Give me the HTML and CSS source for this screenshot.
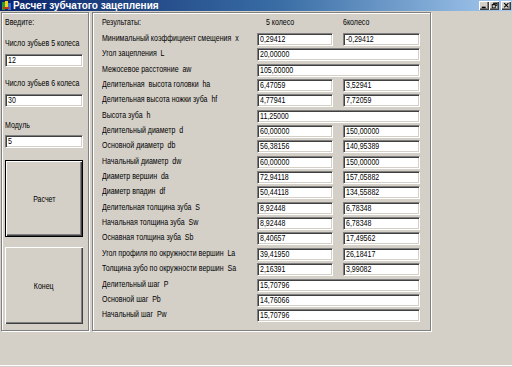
FILE: index.html
```html
<!DOCTYPE html>
<html lang="ru">

<head>
    <meta charset="UTF-8">
    <title>Расчет зубчатого зацепления</title>
    <link rel="stylesheet" href="styles.css">
</head>

<body>
    <div class="window">
        <div class="titlebar">
            <svg class="app-icon" width="9" height="9" viewBox="0 0 9 9">
                <rect x="0" y="1" width="3" height="8" fill="#2e9b2e"/>
                <rect x="3" y="0" width="3" height="7" fill="#f2d21c"/>
                <rect x="6" y="2" width="3" height="7" fill="#3a6fd8"/>
                <rect x="1" y="6" width="6" height="2" fill="#c23a1a"/>
            </svg>
            <span class="title">Расчет зубчатого зацепления</span>
            <div class="caption-buttons">
                <span class="cap-btn">
                    <svg width="9" height="9" viewBox="0 0 9 9"><rect x="1" y="6" width="5" height="2" fill="#000"/></svg>
                </span>
                <span class="cap-btn">
                    <svg width="9" height="9" viewBox="0 0 9 9">
                        <rect x="3.5" y="1.5" width="4" height="3" fill="none" stroke="#000"/>
                        <rect x="3" y="1" width="5" height="1" fill="#000"/>
                        <rect x="1.5" y="3.5" width="4" height="4" fill="#d4d0c8" stroke="#000"/>
                        <rect x="1" y="3" width="5" height="1" fill="#000"/>
                    </svg>
                </span>
                <span class="cap-btn close">
                    <svg width="9" height="9" viewBox="0 0 9 9"><path d="M1.5 1.5 L7 7 M7 1.5 L1.5 7" stroke="#000" stroke-width="1.4"/></svg>
                </span>
            </div>
        </div>

        <div class="client">
            <!-- input panel -->
            <div class="panel input-panel">
                <div class="label first"><span class="t">Введите:</span></div>
                <div class="label gap-a"><span class="t">Число зубьев 5 колеса</span></div>
                <div class="edit gap-b"><span class="t">12</span></div>
                <div class="label gap-c"><span class="t">Число зубьев 6 колеса</span></div>
                <div class="edit gap-b"><span class="t">30</span></div>
                <div class="label gap-e"><span class="t">Модуль</span></div>
                <div class="edit gap-d"><span class="t">5</span></div>
                <button class="btn default"><span class="t mid">Расчет</span></button>
                <button class="btn"><span class="t mid">Конец</span></button>
            </div>

            <!-- results panel -->
            <div class="panel result-panel">
                <div class="head">
                    <span class="head-title"><span class="t">Результаты:</span></span>
                    <span class="head-c1"><span class="t">5 колесо</span></span>
                    <span class="head-c2"><span class="t">6колесо</span></span>
                </div>
                <div class="grid">
                    <div class="rlabel"><span class="t">Минимальный коэффициент смещения  x</span></div>
                    <div class="edit c1"><span class="t">0,29412</span></div>
                    <div class="edit c2"><span class="t">-0,29412</span></div>

                    <div class="rlabel"><span class="t">Угол зацепления  L</span></div>
                    <div class="edit wide"><span class="t">20,00000</span></div>

                    <div class="rlabel"><span class="t">Межосевое расстояние  aw</span></div>
                    <div class="edit wide"><span class="t">105,00000</span></div>

                    <div class="rlabel"><span class="t">Делительная  высота головки  ha</span></div>
                    <div class="edit c1"><span class="t">6,47059</span></div>
                    <div class="edit c2"><span class="t">3,52941</span></div>

                    <div class="rlabel"><span class="t">Делительная высота ножки зуба  hf</span></div>
                    <div class="edit c1"><span class="t">4,77941</span></div>
                    <div class="edit c2"><span class="t">7,72059</span></div>

                    <div class="rlabel"><span class="t">Высота зуба  h</span></div>
                    <div class="edit wide"><span class="t">11,25000</span></div>

                    <div class="rlabel"><span class="t">Делительный диаметр  d</span></div>
                    <div class="edit c1"><span class="t">60,00000</span></div>
                    <div class="edit c2"><span class="t">150,00000</span></div>

                    <div class="rlabel"><span class="t">Основной диаметр  db</span></div>
                    <div class="edit c1"><span class="t">56,38156</span></div>
                    <div class="edit c2"><span class="t">140,95389</span></div>

                    <div class="rlabel"><span class="t">Начальный диаметр  dw</span></div>
                    <div class="edit c1"><span class="t">60,00000</span></div>
                    <div class="edit c2"><span class="t">150,00000</span></div>

                    <div class="rlabel"><span class="t">Диаметр вершин  da</span></div>
                    <div class="edit c1"><span class="t">72,94118</span></div>
                    <div class="edit c2"><span class="t">157,05882</span></div>

                    <div class="rlabel"><span class="t">Диаметр впадин  df</span></div>
                    <div class="edit c1"><span class="t">50,44118</span></div>
                    <div class="edit c2"><span class="t">134,55882</span></div>

                    <div class="rlabel"><span class="t">Делительная толщина зуба  S</span></div>
                    <div class="edit c1"><span class="t">8,92448</span></div>
                    <div class="edit c2"><span class="t">6,78348</span></div>

                    <div class="rlabel"><span class="t">Начальная толщина зуба  Sw</span></div>
                    <div class="edit c1"><span class="t">8,92448</span></div>
                    <div class="edit c2"><span class="t">6,78348</span></div>

                    <div class="rlabel"><span class="t">Оснавная толщина зуба  Sb</span></div>
                    <div class="edit c1"><span class="t">8,40657</span></div>
                    <div class="edit c2"><span class="t">17,49562</span></div>

                    <div class="rlabel"><span class="t">Угол профиля по окружности вершин  La</span></div>
                    <div class="edit c1"><span class="t">39,41950</span></div>
                    <div class="edit c2"><span class="t">26,18417</span></div>

                    <div class="rlabel"><span class="t">Толщина зубо по окружности вершин  Sa</span></div>
                    <div class="edit c1"><span class="t">2,16391</span></div>
                    <div class="edit c2"><span class="t">3,99082</span></div>

                    <div class="rlabel"><span class="t">Делительный шаг  P</span></div>
                    <div class="edit wide"><span class="t">15,70796</span></div>

                    <div class="rlabel"><span class="t">Основной шаг  Pb</span></div>
                    <div class="edit wide"><span class="t">14,76066</span></div>

                    <div class="rlabel"><span class="t">Начальный шаг  Pw</span></div>
                    <div class="edit wide"><span class="t">15,70796</span></div>
                </div>
            </div>
        </div>
        <div class="bottom-edge"></div>
    </div>
</body>

</html>
```
FILE: styles.css
```css
/* form styles */
body {
    margin: 0;
    padding: 0;
    background-color: #d4d0c8;
    font-family: "Liberation Sans", Arial, sans-serif;
    font-size: 9px;
    color: #000;
}

.window {
    width: 512px;
    height: 367px;
    background-color: #d4d0c8;
    overflow: hidden;
    display: flex;
    flex-direction: column;
}

/* the old form font is narrow, squeeze the text */
.t {
    display: inline-block;
    white-space: pre;
    transform: scaleX(0.78);
    transform-origin: 0 50%;
}

.t.mid {
    transform-origin: 50% 50%;
}

/* title bar */
.titlebar {
    flex: none;
    height: 11px;
    display: flex;
    align-items: center;
    background: linear-gradient(to right, #0a246a, #3a6ea5 55%, #a6caf0);
    color: #fff;
    padding-left: 2px;
}

.app-icon {
    flex: none;
}

.title {
    margin-left: 2px;
    font-weight: bold;
    font-size: 10px;
    line-height: 11px;
}

.caption-buttons {
    margin-left: auto;
    margin-right: 1px;
    display: flex;
}

.cap-btn {
    width: 10px;
    height: 9px;
    box-sizing: border-box;
    background-color: #d4d0c8;
    display: flex;
    align-items: center;
    justify-content: center;
    box-shadow: inset 1px 1px #fff, inset -1px -1px #404040, inset -2px -2px #808080;
}

.cap-btn svg {
    width: 7px;
    height: 7px;
}

.cap-btn.close {
    margin-left: 2px;
}

/* client area */
.client {
    flex: none;
    display: flex;
    padding: 1px 0 0 1px;
    height: 319px;
}

.panel {
    box-sizing: border-box;
    height: 319px;
    border: 1px solid #808080;
    box-shadow: inset 1px 1px #fff, 1px 1px #fff;
}

.input-panel {
    width: 88px;
    padding: 0 0 0 3px;
    display: flex;
    flex-direction: column;
    align-items: flex-start;
}

.input-panel > * {
    flex-shrink: 0;
}

.result-panel {
    width: 339px;
    margin-left: 3px;
    padding-left: 9px;
}

.label {
    height: 11px;
    line-height: 11px;
    white-space: nowrap;
}

.first {
    margin-top: 4px;
}

.gap-a {
    margin-top: 10px;
}

.gap-b {
    margin-top: 5px;
}

.gap-c {
    margin-top: 11px;
}

.gap-e {
    margin-top: 13px;
}

.gap-d {
    margin-top: 4px;
}

/* edits */
.edit {
    box-sizing: border-box;
    height: 13px;
    padding: 0 1px;
    line-height: 11px;
    background-color: #fff;
    border: 1px solid;
    border-color: #808080 #fff #fff #808080;
    box-shadow: inset 1px 1px #404040, inset -1px -1px #d4d0c8;
    overflow: hidden;
    white-space: nowrap;
}

.edit .t {
    margin-left: 1px;
}

.input-panel .edit {
    width: 78px;
}

/* buttons */
.btn {
    width: 78px;
    height: 77px;
    margin-top: 10px;
    padding: 0;
    font-family: inherit;
    font-size: 9px;
    color: #000;
    background-color: #d4d0c8;
    border: none;
    box-shadow: inset 1px 1px #fff, inset -1px -1px #404040, inset -2px -2px #808080;
}

.btn.default {
    margin-top: 12px;
    border: 1px solid #000;
}

/* results */
.head {
    display: flex;
    margin-top: 4px;
    height: 11px;
    line-height: 11px;
}

.head-title {
    width: 164px;
}

.head-c1 {
    width: 77px;
}

.grid {
    margin-top: 5px;
    display: grid;
    grid-template-columns: 155px 76px 10px 77px;
    grid-auto-rows: 13px;
    row-gap: 2.35px;
}

.rlabel {
    grid-column: 1;
    line-height: 11px;
    white-space: nowrap;
}

.c1 {
    grid-column: 2;
    width: 76px;
}

.c2 {
    grid-column: 4;
    width: 77px;
}

.wide {
    grid-column: 2 / 5;
    width: 163px;
}

.bottom-edge {
    margin-top: auto;
    height: 2px;
    border-top: 1px solid #fff;
    box-sizing: border-box;
}
```
